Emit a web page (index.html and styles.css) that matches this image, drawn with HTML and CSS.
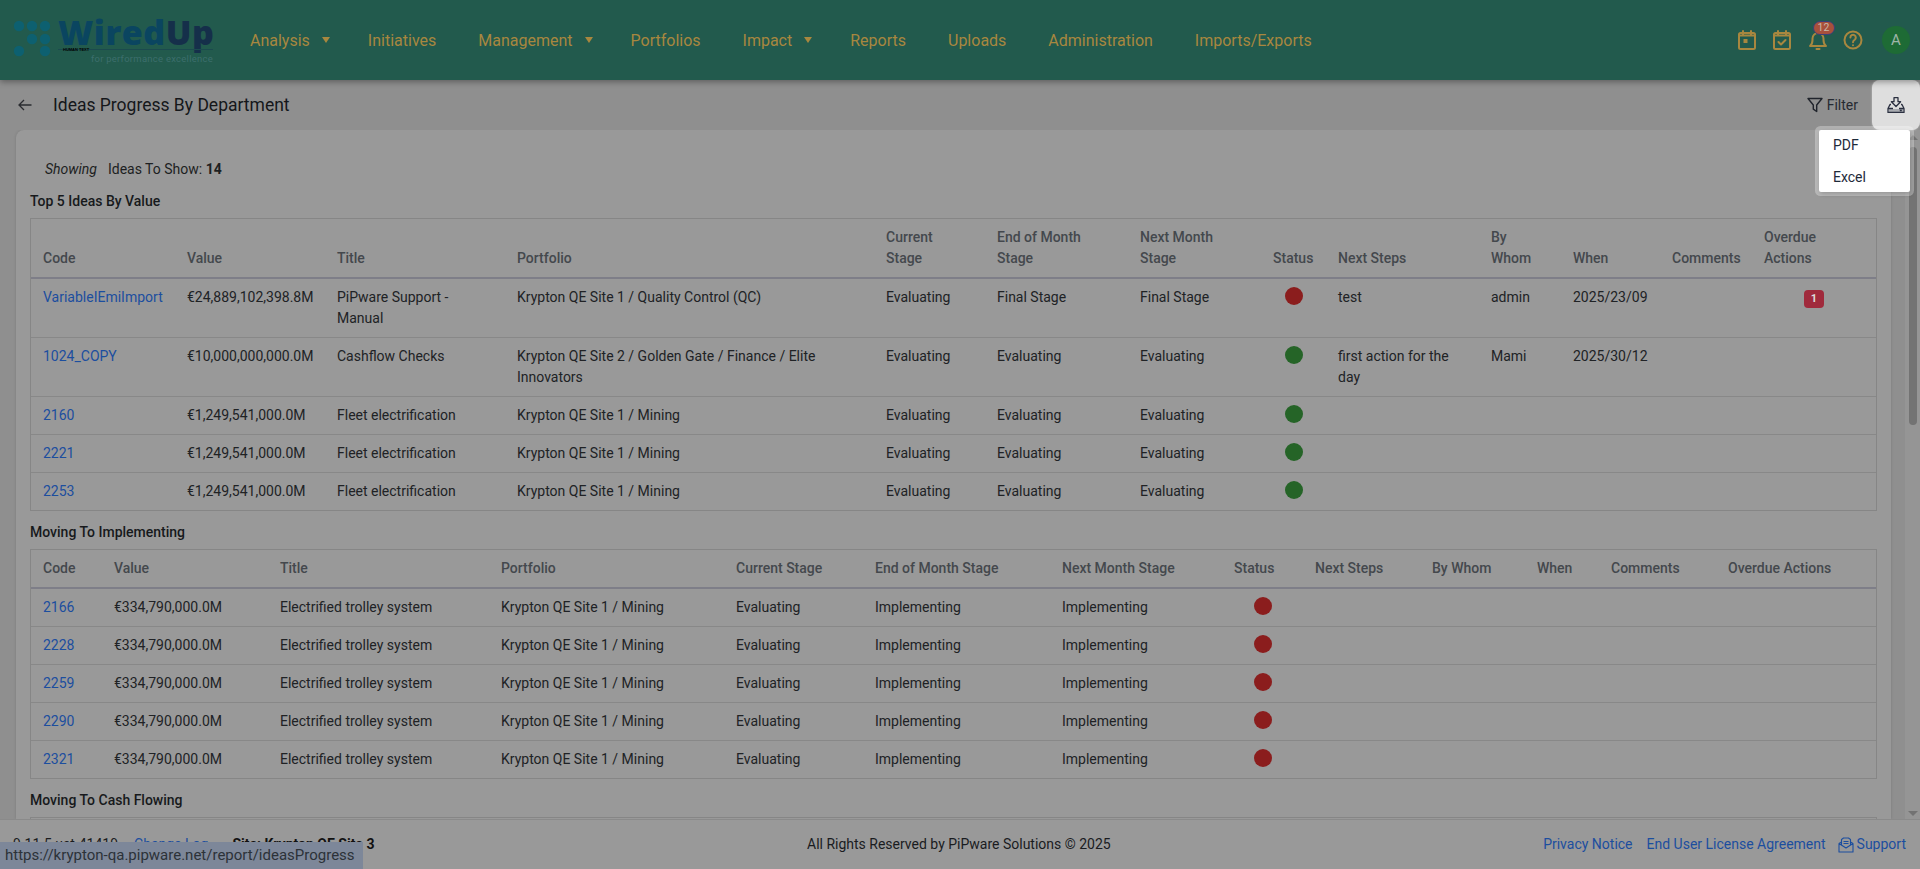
FILE: index.html
```html
<!DOCTYPE html>
<html lang="en">
<head>
<meta charset="utf-8">
<title>Ideas Progress By Department</title>
<link rel="stylesheet" href="styles.css">
</head>
<body>
<header class="topbar">
  <a class="logo" href="#">
    <svg class="logo-dots" width="38" height="38" viewBox="0 0 38 38"><g fill="#0d6070"><circle cx="6" cy="6" r="5.200"/><circle cx="19" cy="6" r="5.200"/><circle cx="32" cy="6" r="5.200"/><circle cx="19" cy="19" r="5.200"/><circle cx="32" cy="19" r="5.200"/><circle cx="6" cy="31" r="5.200"/><circle cx="32" cy="31" r="5.200"/></g></svg>
    <span class="logo-text">
      <span class="logo-word">Wired<span class="logo-up">Up</span></span>
      <span class="logo-rule"><span class="logo-tiny">HUMAN TEXT</span></span>
      <span class="logo-tag">for performance excellence</span>
    </span>
  </a>
  <nav class="mainnav">
    <a class="navitem">Analysis<span class="caret"></span></a>
    <a class="navitem">Initiatives</a>
    <a class="navitem">Management<span class="caret"></span></a>
    <a class="navitem">Portfolios</a>
    <a class="navitem">Impact<span class="caret"></span></a>
    <a class="navitem">Reports</a>
    <a class="navitem">Uploads</a>
    <a class="navitem">Administration</a>
    <a class="navitem">Imports/Exports</a>
  </nav>
  <div class="tools">
    <svg class="tool" viewBox="0 0 24 24"><rect x="4" y="5" width="16" height="16" rx="1.500"/><path d="M8 3v4M16 3v4M4 7.500h16"/><rect x="8.500" y="11" width="4" height="4" class="tool-fill"/></svg>
    <svg class="tool" viewBox="0 0 24 24"><rect x="4" y="5" width="16" height="16" rx="1.500"/><path d="M8 3v4M16 3v4M4 7.500h16M8.500 14l2.500 2.500 4.500-4.500"/></svg>
    <span class="bell">
      <svg class="tool" viewBox="0 0 24 24"><path d="M4 18h16c-1.800-1.400-2.500-3-2.500-6v-1.500a5.500 5.500 0 0 0-11 0V12c0 3-.7 4.600-2.500 6zM10.500 21h3"/></svg>
      <span class="bell-badge">12</span>
    </span>
    <svg class="tool" viewBox="0 0 24 24"><circle cx="12" cy="12" r="8.500"/><path d="M9.400 9.500a2.700 2.700 0 1 1 4.300 2.200c-1 .7-1.700 1.200-1.700 2.500M12 17.200v.1"/></svg>
    <span class="avatar">A</span>
  </div>
</header>

<div class="subbar">
  <svg class="back" width="16" height="16" viewBox="0 0 16 16"><path d="M14.500 8H2M7 3 2 8l5 5"/></svg>
  <h1 class="pagetitle">Ideas Progress By Department</h1>
  <a class="filter">
    <svg width="16" height="16" viewBox="0 0 16 16"><path d="M1 1.500h14L9.700 8v6.500l-3.400-2.300V8z"/></svg>
    Filter
  </a>
  <button class="download">
    <svg width="18" height="16" viewBox="0 0 18 16"><path d="M2 12h14v3H2z" class="dl-fill"/><path d="M7 .7h4v4h2.600L9 9.500 4.400 4.700H7zM4 7.500H3l-2 4v4h16v-4l-2-4h-1"/><path d="M1 11.500h5M12 11.500h5M12.800 13.500h2"/></svg>
  </button>
  <div class="menu">
    <a class="menuitem">PDF</a>
    <a class="menuitem">Excel</a>
  </div>
</div>

<main class="scroller">
  <section class="card">
    <p class="showing"><em>Showing</em><span>Ideas To Show: <b>14</b></span></p>

    <h2 class="sectionhead">Top 5 Ideas By Value</h2>
    <div class="tablebox">
      <table class="grid grid-top">
        <colgroup><col><col><col><col><col><col><col><col><col><col><col><col><col></colgroup>
        <thead><tr><th>Code</th><th>Value</th><th>Title</th><th>Portfolio</th><th>Current<br>Stage</th><th>End of Month<br>Stage</th><th>Next Month<br>Stage</th><th>Status</th><th>Next Steps</th><th>By<br>Whom</th><th>When</th><th>Comments</th><th>Overdue<br>Actions</th></tr></thead>
        <tbody>
          <tr><td><a class="link">VariableIEmiImport</a></td><td>€24,889,102,398.8M</td><td>PiPware Support - Manual</td><td>Krypton QE Site 1 / Quality Control (QC)</td><td>Evaluating</td><td>Final Stage</td><td>Final Stage</td><td class="mid"><i class="dot red"></i></td><td>test</td><td>admin</td><td>2025/23/09</td><td></td><td class="mid"><span class="count">1</span></td></tr>
          <tr><td><a class="link">1024_COPY</a></td><td>€10,000,000,000.0M</td><td>Cashflow Checks</td><td>Krypton QE Site 2 / Golden Gate / Finance / Elite Innovators</td><td>Evaluating</td><td>Evaluating</td><td>Evaluating</td><td class="mid"><i class="dot green"></i></td><td>first action for the day</td><td>Mami</td><td>2025/30/12</td><td></td><td></td></tr>
          <tr><td><a class="link">2160</a></td><td>€1,249,541,000.0M</td><td>Fleet electrification</td><td>Krypton QE Site 1 / Mining</td><td>Evaluating</td><td>Evaluating</td><td>Evaluating</td><td class="mid"><i class="dot green"></i></td><td></td><td></td><td></td><td></td><td></td></tr>
          <tr><td><a class="link">2221</a></td><td>€1,249,541,000.0M</td><td>Fleet electrification</td><td>Krypton QE Site 1 / Mining</td><td>Evaluating</td><td>Evaluating</td><td>Evaluating</td><td class="mid"><i class="dot green"></i></td><td></td><td></td><td></td><td></td><td></td></tr>
          <tr><td><a class="link">2253</a></td><td>€1,249,541,000.0M</td><td>Fleet electrification</td><td>Krypton QE Site 1 / Mining</td><td>Evaluating</td><td>Evaluating</td><td>Evaluating</td><td class="mid"><i class="dot green"></i></td><td></td><td></td><td></td><td></td><td></td></tr>
        </tbody>
      </table>
    </div>

    <h2 class="sectionhead">Moving To Implementing</h2>
    <div class="tablebox">
      <table class="grid grid-impl">
        <colgroup><col><col><col><col><col><col><col><col><col><col><col><col><col></colgroup>
        <thead><tr><th>Code</th><th>Value</th><th>Title</th><th>Portfolio</th><th>Current Stage</th><th>End of Month Stage</th><th>Next Month Stage</th><th>Status</th><th>Next Steps</th><th>By Whom</th><th>When</th><th>Comments</th><th>Overdue Actions</th></tr></thead>
        <tbody>
          <tr><td><a class="link">2166</a></td><td>€334,790,000.0M</td><td>Electrified trolley system</td><td>Krypton QE Site 1 / Mining</td><td>Evaluating</td><td>Implementing</td><td>Implementing</td><td class="mid"><i class="dot red"></i></td><td></td><td></td><td></td><td></td><td></td></tr>
          <tr><td><a class="link">2228</a></td><td>€334,790,000.0M</td><td>Electrified trolley system</td><td>Krypton QE Site 1 / Mining</td><td>Evaluating</td><td>Implementing</td><td>Implementing</td><td class="mid"><i class="dot red"></i></td><td></td><td></td><td></td><td></td><td></td></tr>
          <tr><td><a class="link">2259</a></td><td>€334,790,000.0M</td><td>Electrified trolley system</td><td>Krypton QE Site 1 / Mining</td><td>Evaluating</td><td>Implementing</td><td>Implementing</td><td class="mid"><i class="dot red"></i></td><td></td><td></td><td></td><td></td><td></td></tr>
          <tr><td><a class="link">2290</a></td><td>€334,790,000.0M</td><td>Electrified trolley system</td><td>Krypton QE Site 1 / Mining</td><td>Evaluating</td><td>Implementing</td><td>Implementing</td><td class="mid"><i class="dot red"></i></td><td></td><td></td><td></td><td></td><td></td></tr>
          <tr><td><a class="link">2321</a></td><td>€334,790,000.0M</td><td>Electrified trolley system</td><td>Krypton QE Site 1 / Mining</td><td>Evaluating</td><td>Implementing</td><td>Implementing</td><td class="mid"><i class="dot red"></i></td><td></td><td></td><td></td><td></td><td></td></tr>
        </tbody>
      </table>
    </div>

    <h2 class="sectionhead">Moving To Cash Flowing</h2>
    <div class="tablebox tablebox-cut"></div>
  </section>
  <div class="scrollbar">
    <i class="sb-arrow sb-up"></i>
    <i class="sb-thumb"></i>
    <i class="sb-arrow sb-down"></i>
  </div>
</main>

<footer class="footer">
  <div class="foot-left"><span>9.11.5 ust-41419</span><a class="link">Change Log</a><b>Site: Krypton QE Site 3</b></div>
  <div class="foot-mid">All Rights Reserved by PiPware Solutions © 2025</div>
  <div class="foot-right">
    <a class="link">Privacy Notice</a>
    <a class="link">End User License Agreement</a>
    <a class="link support"><svg width="16" height="16" viewBox="0 0 16 16"><path d="M1 6.500 8 11l7-4.500V15H1zM1 6.500 3.500 5M15 6.500 12.500 5M3.500 8V2.500l2-1.500h5l2 1.500V8M5.500 4.500h5M5.500 6.500h5"/></svg>Support</a>
  </div>
</footer>
<div class="statusurl">https://krypton-qa.pipware.net/report/ideasProgress</div>
</body>
</html>
```
FILE: styles.css
```css
* { box-sizing: border-box; }
html, body { height: 100%; }
body {
  margin: 0;
  height: 100vh;
  overflow: hidden;
  display: flex;
  flex-direction: column;
  font: 14px/21px Roboto, "Liberation Sans", sans-serif;
  color: #202225;
  background: #8f8f8f;
}
a { text-decoration: none; }

/* top bar */
.topbar {
  flex: 0 0 80px;
  display: flex;
  align-items: flex-start;
  background: #225a4d;
  box-shadow: 0 2px 6px rgba(0, 0, 0, .35);
  padding-left: 13px;
  position: relative;
  z-index: 2;
}
.logo { display: flex; align-items: flex-start; width: 204px; padding-top: 17px; flex: none; }
.logo-dots { margin-top: 3px; margin-right: 7px; flex: none; }
.logo-text { display: flex; flex-direction: column; width: 155px; }
.logo-word { font: 800 34px/30px "Open Sans", Inter, sans-serif; letter-spacing: .5px; color: #0a4560; white-space: nowrap; height: 30px; }
.logo-up { color: #152f4a; }
.logo-rule { display: block; margin-top: 2px; border-top: 1px solid #1b4a4e; height: 5px; position: relative; }
.logo-tiny { position: absolute; left: 5px; top: -3px; font: 700 4px/5px "Liberation Sans", sans-serif; color: #000; }
.logo-tag { font: 400 9.500px/10px Roboto, sans-serif; color: #3c6e6c; text-align: right; letter-spacing: .25px; white-space: nowrap; }
.mainnav { display: flex; align-items: center; gap: 42px; margin-left: 33px; height: 80px; }
.navitem { font-size: 16px; color: #a8873f; display: flex; align-items: center; white-space: nowrap; }
.caret { width: 0; height: 0; margin-left: 12px; margin-right: -4px; border-left: 4px solid transparent; border-right: 4px solid transparent; border-top: 6px solid #a8873f; }
.tools { margin-left: auto; height: 80px; display: flex; align-items: center; gap: 11.500px; padding-right: 10px; }
.tool { width: 24px; height: 24px; fill: none; stroke: #a8873f; stroke-width: 2; stroke-linecap: round; stroke-linejoin: round; display: block; }
.tool-fill { fill: #a8873f; stroke: none; }
.bell { position: relative; display: block; }
.bell-badge {
  position: absolute; left: 7px; top: -7px;
  width: 22px; height: 14px; border-radius: 7px;
  background: #a8503c; border: 1px solid #3a3f7a;
  font-size: 10.500px; line-height: 12px; text-align: center; color: #c9b9a8;
}
.avatar { width: 28px; height: 28px; margin-left: 5.500px; border-radius: 50%; background: #1e6b35; color: #9fb5a8; font-size: 15px; line-height: 28px; text-align: center; }

/* sub bar */
.subbar { flex: 0 0 50px; display: flex; align-items: center; position: relative; padding-left: 17px; z-index: 1; }
.back { fill: none; stroke: #2a2c30; stroke-width: 1.300; margin-right: 20px; }
.pagetitle { margin: 0; font-size: 17.500px; font-weight: 400; line-height: 24px; color: #15171a; }
.filter { margin-left: auto; display: flex; align-items: center; gap: 4px; color: #262a32; font-size: 14px; margin-right: 14px; }
.filter svg { fill: none; stroke: #20242c; stroke-width: 1.400; stroke-linejoin: round; }
.download { width: 48px; height: 50px; border: 0; padding: 0; border-radius: 8px; background: #dedede; display: flex; align-items: center; justify-content: center; box-shadow: 0 0 2px rgba(255, 255, 255, .5); }
.download svg { fill: none; stroke: #2b3040; stroke-width: 1.300; stroke-linejoin: round; }
.download .dl-fill { fill: #a9abb0; stroke: none; }
.menu {
  position: absolute; left: 1819px; top: 50px; z-index: 5;
  width: 91px; height: 62px;
  padding: 2px 0;
  background: #fff;
  box-shadow: 0 0 0 4px rgba(255, 255, 255, .3), 1px 2px 4px rgba(0, 0, 0, .3);
  border-radius: 2px;
}
.menuitem { display: block; padding: 0 14px; height: 32px; line-height: 27px; color: #1e2a3a; font-size: 14px; }

/* scroll area: the content is cut by the footer; the scrollbar is drawn over it */
.scroller { flex: 1 1 0; min-height: 0; overflow: hidden; position: relative; padding-left: 16px; padding-right: 29px; }
.scrollbar { position: absolute; top: 0; right: 0; bottom: 0; width: 15px; background: #959595; display: flex; flex-direction: column; align-items: center; }
.sb-thumb { display: block; width: 8px; height: 278px; margin-top: 7px; border-radius: 4px; background: #737373; }
.sb-arrow { display: block; width: 0; height: 0; border-left: 5px solid transparent; border-right: 5px solid transparent; }
.sb-up { margin-top: 5px; border-bottom: 5px solid #727272; }
.sb-down { margin-top: auto; margin-bottom: 3px; border-top: 5px solid #727272; }
.card { height: 100%; background: #999; border-radius: 8px 8px 0 0; padding: 29px 14px 0; box-shadow: 0 0 3px rgba(0, 0, 0, .15); }
.showing { margin: 0 0 11px; padding-left: 15px; display: flex; gap: 11px; color: #1d1f22; }
.sectionhead { margin: 11px 0 6px; font-size: 14px; line-height: 21px; font-weight: 500; color: #17191c; }
.tablebox { border: 1px solid #868686; }
.tablebox-cut { height: 40px; border-bottom: 0; }
.grid { width: 100%; table-layout: fixed; border-collapse: separate; border-spacing: 0; }
.grid th { padding: 8px 12px; font-weight: 500; text-align: left; vertical-align: bottom; color: #44484d; border-bottom: 2px solid #7e7e88; }
.grid td { padding: 8px 12px; vertical-align: top; color: #202225; border-bottom: 1px solid #888; }
.grid tbody tr:last-child td { border-bottom: 0; }
.grid td.mid { text-align: center; padding-left: 0; padding-right: 0; }
.link { color: #1c4e9f; }
.dot { display: block; width: 18px; height: 18px; border-radius: 50%; margin: 0 auto; }
.red { background: #8b1d1d; }
.green { background: #256427; }
.count { display: block; width: 20px; height: 18px; margin: 3px auto 0; border-radius: 4px; background: #a02a3c; color: #ddd; font-size: 11px; font-weight: 700; line-height: 18px; }

.grid-top col:nth-child(1) { width: 144px; }
.grid-top col:nth-child(2) { width: 150px; }
.grid-top col:nth-child(3) { width: 180px; }
.grid-top col:nth-child(4) { width: 369px; }
.grid-top col:nth-child(5) { width: 111px; }
.grid-top col:nth-child(6) { width: 143px; }
.grid-top col:nth-child(7) { width: 133px; }
.grid-top col:nth-child(8) { width: 65px; }
.grid-top col:nth-child(9) { width: 153px; }
.grid-top col:nth-child(10) { width: 82px; }
.grid-top col:nth-child(11) { width: 99px; }
.grid-top col:nth-child(12) { width: 92px; }

.grid-impl col:nth-child(1) { width: 71px; }
.grid-impl col:nth-child(2) { width: 166px; }
.grid-impl col:nth-child(3) { width: 221px; }
.grid-impl col:nth-child(4) { width: 235px; }
.grid-impl col:nth-child(5) { width: 139px; }
.grid-impl col:nth-child(6) { width: 187px; }
.grid-impl col:nth-child(7) { width: 172px; }
.grid-impl col:nth-child(8) { width: 81px; }
.grid-impl col:nth-child(9) { width: 117px; }
.grid-impl col:nth-child(10) { width: 105px; }
.grid-impl col:nth-child(11) { width: 74px; }
.grid-impl col:nth-child(12) { width: 117px; }

/* footer */
.footer { flex: 0 0 50px; display: flex; align-items: center; position: relative; background: #999; border-top: 1px solid #8a8a8a; padding: 0 14px 0 13px; line-height: 21px; z-index: 1; }
.foot-left { display: flex; width: 620px; flex: none; color: #1a1c1f; }
.foot-left .link { margin-left: 16px; margin-right: 24px; }
.foot-left b { font-weight: 700; color: #111; }
.foot-mid { margin-left: 174px; color: #1a1c1f; white-space: nowrap; }
.foot-right { margin-left: auto; display: flex; gap: 14px; }
.support { display: flex; align-items: center; gap: 3px; margin-left: -2px; }
.support svg { fill: none; stroke: #1c4e9f; stroke-width: 1.100; stroke-linejoin: round; }
.statusurl { position: fixed; left: 0; bottom: 0; width: 363px; height: 27px; padding-left: 5px; background: #7d8799; color: #2c3238; font-size: 15px; line-height: 27px; z-index: 6; white-space: nowrap; }
```
